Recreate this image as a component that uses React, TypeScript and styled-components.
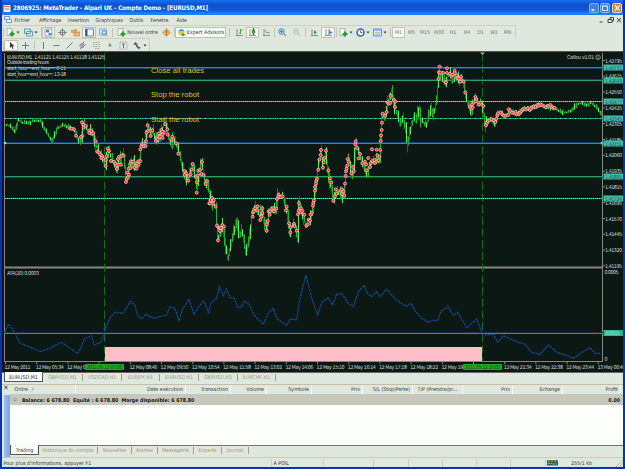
import React from "react";
import styled, { createGlobalStyle } from "styled-components";

const GlobalStyle = createGlobalStyle`
  * {
    box-sizing: border-box;
  }
  body {
    margin: 0;
    overflow: hidden;
  }
`;

const Window = styled.div`
  display: flex;
  flex-direction: column;
  width: 625px;
  height: 469px;
  border: solid #0a32b4;
  border-width: 0 2px 2px;
  background: #dfe8de;
  color: #3c3a36;
  font-family: "DejaVu Sans Condensed", "DejaVu Sans", sans-serif;
  font-size: 5.3px;
  line-height: 8px;
  white-space: nowrap;
`;

const TitleBar = styled.div`
  display: flex;
  align-items: center;
  height: 15px;
  padding: 1px 0 0 1px;
  background: linear-gradient(#1670f4, #0b50c8 35%, #0f5cdc 70%, #1c80ff 90%);
`;

const Title = styled.span`
  flex: 1;
  margin-left: 2px;
  color: #fff;
  font-size: 6.2px;
  font-weight: bold;
  letter-spacing: -0.11px;
`;

const WindowButton = styled.span<{ $close?: boolean }>`
  display: flex;
  width: 10px;
  height: 10px;
  margin-right: 1.5px;
  border: 1px solid ${(props) => (props.$close ? "#f0d8b8" : "#86b4f4")};
  border-radius: 2px;
  background: ${(props) => (props.$close ? "#cc843c" : "#3c80e4")};
`;

const MenuBar = styled.div`
  display: flex;
  align-items: center;
  height: 10px;
  padding-left: 2px;
`;

const MenuItem = styled.span<{ $width: number }>`
  width: ${(props) => props.$width}px;
`;

const Toolbar = styled.div<{ $width: number }>`
  display: flex;
  align-items: center;
  width: ${(props) => props.$width}px;
  height: 13px;
  border: solid #d8ccb8;
  border-width: 1px 1px 0 0;
`;

const Tool = styled.span<{ $width: number; $pressed?: boolean }>`
  display: flex;
  flex: none;
  align-items: center;
  justify-content: center;
  gap: 1px;
  width: ${(props) => props.$width}px;
  height: 11px;
  border: 1px solid ${(props) => (props.$pressed ? "#c4c0b0" : "transparent")};
  background: ${(props) => (props.$pressed ? "#f6faf5" : "transparent")};
`;

const Timeframe = styled(Tool)`
  color: #77736a;
`;

const Separator = styled.i<{ $width: number }>`
  flex: none;
  width: ${(props) => props.$width}px;
  height: 9px;
  background: linear-gradient(#c8c0ac, #c8c0ac) center / 1px 100% no-repeat;
`;

const Chart = styled.svg`
  display: block;
  flex: none;
  width: 621px;
  height: 321px;
  background: #0c1814;
`;

const ChartTabs = styled.div`
  display: flex;
  height: 12px;
  padding-left: 2px;
  border-top: 1px solid #6c675c;
`;

const Tab = styled.span<{ $width: number; $active?: boolean }>`
  width: ${(props) => props.$width}px;
  height: ${(props) => (props.$active ? "10px" : "7px")};
  margin-top: ${(props) => (props.$active ? "-1px" : "1px")};
  border: solid #a89c84;
  border-width: 0 1px 0 0;
  background: ${(props) => (props.$active ? "#fcfdfb" : "transparent")};
  color: ${(props) => (props.$active ? "#333" : "#a0977f")};
  line-height: ${(props) => (props.$active ? "10px" : "7px")};
  text-align: center;
  ${(props) => props.$active && "border: 1px solid #555; border-top: 0;"}
`;

const Terminal = styled.div`
  display: flex;
  height: 73px;
  border-top: 1px solid #c4bca4;
`;

const Handle = styled.div`
  display: flex;
  flex-direction: column;
  width: 8px;
  align-items: center;
`;

const HandleStrip = styled.div`
  width: 6px;
  height: 64px;
  margin: 1px 0 0 1px;
  background: linear-gradient(90deg, #9cc0f0, #7ca4e0);
`;

const TerminalBody = styled.div`
  flex: 1;
  display: flex;
  flex-direction: column;
  background: #fcfefb;
`;

const HeaderRow = styled.div`
  display: flex;
  height: 9px;
  background: #dfe8de;
`;

const HeaderCell = styled.span<{ $width: number; $left?: boolean }>`
  width: ${(props) => props.$width}px;
  padding: 0 2px 0 4.5px;
  border-right: 1px solid #f4f7f2;
  line-height: 9px;
  text-align: ${(props) => (props.$left ? "left" : "right")};
`;

const BalanceRow = styled.div`
  display: flex;
  align-items: center;
  justify-content: space-between;
  height: 11px;
  padding: 0 3px 0 3px;
  background: #c8c7bb;
  color: #161616;
  font-size: 5.25px;
  font-weight: bold;
`;

const Balance = styled.span`
  display: flex;
  align-items: center;
  gap: 5px;
`;

const TerminalTabs = styled.div`
  display: flex;
  height: 12px;
  margin-top: auto;
  border-top: 1px solid #77756c;
  background: #dfe8de;
`;

const StatusBar = styled.div`
  display: flex;
  flex: 1;
  align-items: center;
  border-top: 1px solid #d0c8b0;
`;

const StatusCell = styled.span<{ $width: number }>`
  display: flex;
  flex: none;
  align-items: center;
  width: ${(props) => props.$width}px;
  height: 8px;
  padding-left: 1.5px;
  border-right: 1px solid #d8cbb9;
`;

const Traffic = styled.span`
  flex: 1;
  padding-left: 12px;
`;

type IconProps = { children: React.ReactNode; width?: number };

const Icon = ({ children, width = 9 }: IconProps): JSX.Element => (
  <svg width={width} height="9" viewBox={`0 0 ${width} 9`} fill="none">
    {children}
  </svg>
);

const Caret = (): JSX.Element => (
  <Icon width={4}>
    <path d="M.5 3.5h3L2 5.5z" fill="#333" />
  </Icon>
);

const PlusMark = (): JSX.Element => (
  <path d="M6 3.5v5M3.5 6h5" stroke="#1ea22c" strokeWidth="2" />
);

const Page = (): JSX.Element => (
  <path d="M1 .5h5v7H1z" fill="#fff" stroke="#98a498" strokeWidth=".8" />
);

const Axes = (): JSX.Element => (
  <path d="M2 1v7M1 7.5h7" stroke="#77786e" strokeWidth=".8" />
);

const timeframes: [string, number][] = [
  ["M5", 13],
  ["M15", 14],
  ["M30", 14],
  ["H1", 14],
  ["H4", 14],
  ["D1", 13],
  ["W1", 14],
  ["MN", 13],
];

const pricePoints = `5,125 10,126 15,131 18,120 23,123 30,122 41,120 45,130 52,141 57,129
63,125 72,128 76,133 79,142 82,135 83,122 88,131 93,132 96,145 100,155 106,165 108,148
112,160 117,170 119,158 124,155 126,181 129,168 133,161 137,166 140,161 141,145 145,143
148,125 151,135 153,130 156,141 160,134 165,123 169,137 172,143 173,137 177,147 180,155
184,172 188,180 193,165 197,185 200,170 202,162 205,183 209,189 212,202 216,207 218,240
223,225 226,247 228,260 232,240 237,219 240,237 242,230 246,253 250,233 252,217 255,208
258,213 262,208 267,232 269,212 276,208 278,195 283,197 287,210 290,230 294,223 298,240
299,203 303,213 306,227 310,223 313,207 315,190 318,170 321,152 323,165 326,152 329,177
334,202 336,190 340,192 344,197 346,170 349,158 352,175 354,167 356,142 359,153 363,165
367,172 372,163 377,160 380,157 382,117 385,120 388,103 392,90 395,107 400,125 403,117
406,128 408,145 411,128 414,117 416,120 419,108 421,120 426,126 431,108 434,113 437,100
439,73 442,78 446,80 450,73 452,82 457,75 463,82 466,97 471,110 475,100 478,103 482,103
486,125 490,118 495,125 498,113 501,112 505,117 508,113 510,110 518,113 525,108 531,109
538,105 543,106 550,107 555,109 560,111 565,113 571,111 576,105 581,103 585,105 591,103
597,108 603,115`
  .split(/\s+/)
  .map((point) => point.split(",").map(Number));

const priceAt = (x: number): number => {
  const i = Math.max(1, pricePoints.findIndex((point) => point[0] >= x));
  const [x0, y0] = pricePoints[i - 1];
  const [x1, y1] = pricePoints[i];
  return y0 + ((y1 - y0) * (x - x0)) / (x1 - x0);
};

const bars = Array.from({ length: 597 }, (_, i) => {
  const x = i + 5;
  const calm = x < 80 || x > 486;
  const size = calm ? 3 : 8;
  const a = priceAt(x);
  const b = priceAt(x + 1);
  const up = ((i * 37) % 11) / 11;
  const down = ((i * 53) % 13) / 13;
  return {
    x: x + 0.5,
    top: Math.min(a, b) - up * up * size - 0.5,
    bottom: Math.max(a, b) + down * down * size + 0.5,
    color: ["#128a14", "#1fb424", "#0f7512", "#52f058"][(i * 7) % 4],
  };
});

// Trade markers, at three units per pixel, grouped by chart section.
const markers = [
  {
    x: 0,
    y: 80,
    points: `210,145 215,146 222,148 228,167 246,127 250,135 251,143 257,138 247,168 243,171
268,152 268,159 275,154 275,161 280,160 287,184 292,215 297,217 300,223 306,228 304,234 310,236
317,240 317,258 320,228 323,206 327,213 333,243 342,245 346,251 350,256 351,267 358,230 354,237
356,254 363,254 364,228 371,227 378,306 380,297 384,292 382,278 387,284 386,266 392,264 392,250
393,244 401,245 404,262 410,252 409,266 412,258 415,244 416,254 421,243 421,208 424,199 426,192
431,193 432,199 437,198 438,184 440,158 443,136 445,152 452,168 452,152 457,151 468,183 470,174
473,178 475,169 477,160 480,170 484,150 488,163 488,174 496,132 502,148 492,157 487,155 503,164
517,170 515,180 528,190 535,221 553,273 558,280 554,285 565,302 565,288 572,283 575,269 578,252
590,338 591,307 589,291 593,286 595,272 600,270 606,246 604,282 611,285 617,312 621,303 628,370`,
  },
  {
    x: 200,
    y: 80,
    points: `30,370 31,360 36,354 38,364 41,361 39,371 47,380 51,437 54,481 56,443 60,453 59,444
63,444 67,435 72,440 158,410 159,397 162,394 165,385 173,379 172,390 187,385 187,399 183,407 181,420
184,410 200,452 201,433 203,423 209,404 206,394 210,394 215,386 220,384 222,394 229,386 231,357
236,344 235,350 241,351 248,349 260,380 258,391 267,430 272,441 271,457 282,432 283,438 291,452
294,403 296,392 297,370 303,385 302,397 307,392 313,404 319,437 323,433 326,419 330,422 332,404
336,398 339,377 340,369 342,361 345,332 345,321 348,311 349,303 351,296 355,269 358,239 362,225
363,210 373,234 371,246 369,263 378,212 385,271 390,295 394,307 400,362 407,328 410,341 405,349
422,332 426,328 431,335 433,347 426,342 435,311 437,288 438,274 440,266 442,257 443,237 446,245
454,280 460,261 461,273 466,193 467,184 472,204 480,222 476,235 487,250 495,245 499,253 500,271
505,234 512,250 510,261 516,208 518,242 524,240 525,249 530,209 532,226 536,241 538,231 541,210
542,183 543,166 545,150 546,128 548,101 555,108 560,96 562,67 566,71 571,69 572,48 582,60 586,65
585,81`,
  },
  {
    x: 400,
    y: 50,
    points: `119,50 117,67 116,87 121,68 130,69 141,55 141,69 136,96 138,97 151,72 155,77 159,74
164,62 165,70 170,76 172,84 176,86 183,80 184,90 181,95 191,95 196,127 209,170 214,175 218,173
216,163 221,158 226,141 229,148 228,154 236,164 241,158 250,168 258,226 261,219 264,213 269,211
275,208 282,211 286,216 289,207 292,196 294,190 302,187 307,193 311,197 317,197 325,195 326,178
331,183 336,188 343,190 347,186 350,193 356,193 360,189 364,183 368,178 373,175 379,178 384,174
389,180 393,176 397,171 402,169 407,171 412,165 417,167 422,163 427,166 433,169 438,172 444,168
451,165 457,171 461,175 464,174`,
  },
];

const atrPoints = `13,205 25,178 40,195 60,235 95,248 120,260 150,250 185,232 210,250 232,265
245,245 252,222 275,212 282,240 303,232 312,205 330,158 345,142 370,145 392,108 405,120 412,150
425,162 437,148 460,160 480,155 500,150 510,125 525,130 537,168 548,132 567,103 582,148 596,126
610,108 615,115 625,143 633,115 650,100 658,65 670,92 680,72 690,98 703,100 713,128 725,125
733,108 750,120 760,148 790,178 805,145 820,130 830,160 860,182 870,162 890,165 897,115 908,68
918,30 935,100 953,150 965,112 985,98 997,120 1010,88 1025,85 1045,115 1060,125 1075,80 1093,60
1102,85 1115,95 1130,80 1140,95 1160,72 1175,90 1190,105 1218,125 1233,115 1245,138 1265,160
1285,172 1295,165 1313,168 1323,138 1345,125 1360,152 1373,142 1400,188 1430,162 1445,200 1455,210
1480,208 1493,232 1510,212 1545,228 1575,238 1595,262 1620,268 1645,240 1670,262 1695,270 1720,280
1745,262 1770,248 1785,265 1803,265`;

type Level = {
  y: number;
  label: string;
  blue?: "above" | "below";
  dash?: string;
};

const levels: Level[] = [
  { y: 67, label: "1.42731", blue: "below" },
  { y: 80, label: "1.42643", blue: "above" },
  { y: 101, label: "1.42477", dash: "1 1" },
  { y: 118, label: "1.42345", dash: "1 4" },
  { y: 143, label: "1.42151", blue: "above" },
  { y: 176, label: "1.41891", blue: "below" },
  { y: 198, label: "1.41724", dash: "1 1" },
];

const prices = [
  "1.42795", "1.42675", "1.42550", "1.42425", "1.42305", "1.42185", "1.42060",
  "1.41935", "1.41815", "1.41695", "1.41570", "1.41445", "1.41320", "1.41195",
];

const times = [
  "12 May 2011", "12 May 05:34", "12 May 06:38", "", "12 May 08:46",
  "12 May 09:50", "12 May 10:54", "12 May 11:58", "12 May 13:02",
  "12 May 14:06", "12 May 15:10", "12 May 16:14", "12 May 17:18",
  "12 May 18:22", "12 May 19:26", "", "12 May 21:34", "12 May 22:38",
  "12 May 23:44", "13 May 00:48",
];

const PriceChart = (): JSX.Element => (
  <Chart viewBox="2 51 621 321" fontSize="5.3" fill="#d4d8d2">
    <path d="M2 51.5h621" stroke="#59554a" />
    <path d="M4.5 53v308.500M602.500 53v308.500" stroke="#8c8680" />
    <path d="M4 267.500h599" stroke="#8c8680" strokeWidth="2" />
    <path d="M4 361.500h599" stroke="#8c8680" />
    <rect x="105" y="347" width="377" height="14" fill="#ffbfca" />
    <path
      d="M104.500 53v308M482.500 53v308"
      stroke="#147014"
      strokeDasharray="8.200 3.500"
    />
    <path d="M480 52.500h5l-2.500 2.500z" fill="#a8a8a8" />

    {levels.map(({ y, blue, dash }) => (
      <g key={y}>
        {blue && (
          <path
            d={`M5 ${blue === "above" ? y - 0.5 : y + 1.5}h598`}
            stroke="#124470"
          />
        )}
        <path d={`M5 ${y + 0.5}h598`} stroke="#2a9c6c" />
        {dash && (
          <path
            d={`M5 ${y + 0.5}h598`}
            stroke="#7ce8cc"
            strokeDasharray={dash}
          />
        )}
      </g>
    ))}
    <path d="M5 332.500h598" stroke="#0e3048" />
    <path d="M5 333.500h598" stroke="#2a9c6c" />

    {bars.map(({ x, top, bottom, color }) => (
      <path key={x} d={`M${x} ${top}V${bottom}`} stroke={color} />
    ))}
    {markers.map(({ x, y, points }) => (
      <g key={x} transform={`translate(${x} ${y}) scale(.33333)`}>
        {points.split(/\s+/).map((point, i) => {
          const [cx, cy] = point.split(",");
          return (
            <circle
              key={i}
              cx={cx}
              cy={cy}
              r="4.500"
              fill="#fa2224"
              stroke="#ecc4bc"
              strokeWidth="2.600"
            />
          );
        })}
      </g>
    ))}
    <circle cx="5" cy="143" r="1.300" fill="#8ce8e8" />
    <circle cx="602" cy="143" r="1.500" fill="#50d0b8" />

    <polyline
      points={atrPoints}
      transform="translate(0 265) scale(.33333)"
      fill="none"
      stroke="#124c94"
      strokeWidth="3.500"
      strokeDasharray="8 2"
    />

    <text x="7" y="59" textLength="98">
      EURUSD,M1 &nbsp;1.41121 1.41125 1.41118 1.41125
    </text>
    <text x="7" y="64" textLength="42">Outside trading hours</text>
    <text x="7" y="70" textLength="59">start_hour=end_hour=: 6-11</text>
    <text x="7" y="75.500" textLength="59">start_hour=end_hour=: 13-18</text>
    <text x="567" y="59" textLength="27">Caillou v1.01</text>
    <g fill="none" stroke="#c8ccc8" strokeWidth=".6">
      <circle cx="598" cy="57.300" r="2.300" />
      <path d="M596.800 57.800q1.200 1.400 2.400 0M597.200 56.300v.5M598.800 56.300v.5" />
    </g>
    <text x="7" y="275" textLength="32">ATR(20) 0.0003</text>
    <g
      fill="#d8c80c"
      fontFamily="Liberation Sans, Arial, sans-serif"
      fontSize="7.600"
    >
      <text x="151" y="73" textLength="53">Close all trades</text>
      <text x="151" y="97" textLength="48">Stop the robot</text>
      <text x="151" y="121.500" textLength="48">Start the robot</text>
    </g>

    {prices.map((price, i) => (
      <g key={price}>
        <path d={`M603 ${60.5 + i * 15.8}h2`} stroke="#8c8680" />
        <text x="605" y={62.5 + i * 15.8} textLength="17">
          {price}
        </text>
      </g>
    ))}
    {levels.map(({ y, label }) => (
      <g key={label}>
        <rect x="603.500" y={y - 2.5} width="19.500" height="6" fill="#44bca4" />
        <text x="605" y={y + 2.5} fill="#145c6c" textLength="17">
          {label}
        </text>
      </g>
    ))}
    <text x="604.500" y="274" textLength="14">0.0005</text>
    <rect x="603.500" y="330" width="19.500" height="6" fill="#34ac84" />
    <text x="605" y="335" fill="#90f0dc" textLength="15">0.00015</text>
    <text x="604.500" y="361">0</text>

    {times.map((time, i) => (
      <g key={i}>
        <path d={`M${5.5 + i * 31.2} 362v2`} stroke="#8c8680" />
        {time && (
          <text
            x={4.6 + i * 31.2}
            y="369"
            textLength={i ? 28 : 26}
          >
            {time}
          </text>
        )}
      </g>
    ))}
    {[85, 463].map((x, i) => (
      <g key={x}>
        <rect x={x} y="364" width="39" height="6" rx="1" fill="#24a824" />
        <text x={x + 1.5} y="369" fill="#0c5410" textLength="36">
          {i ? "2011.05.12 20:00" : "2011.05.12 07:00"}
        </text>
      </g>
    ))}
  </Chart>
);

const App = (): JSX.Element => {
  return (
    <>
      <GlobalStyle />
      <Window>
        <TitleBar>
          <Icon width={8}>
            <path d="M.5 1h7v7h-7z" fill="#fff4f0" />
            <path d="M1 2.500h6M1.500 5h5" stroke="#d86c58" />
          </Icon>
          <Title>
            2806925: MetaTrader - Alpari UK - Compte Demo - [EURUSD,M1]
          </Title>
          <WindowButton>
            <Icon width={8}>
              <path d="M1.500 6h3" stroke="#fff" strokeWidth="1.500" />
            </Icon>
          </WindowButton>
          <WindowButton>
            <Icon width={8}>
              <path d="M1.500 2h5v4.500h-5z" stroke="#fff" />
            </Icon>
          </WindowButton>
          <WindowButton $close>
            <Icon width={8}>
              <path d="M2 1.500l4.500 5M6.500 1.500L2 6.500" stroke="#fff" strokeWidth="1.300" />
            </Icon>
          </WindowButton>
        </TitleBar>

        <MenuBar>
          <MenuItem $width={10.5}>
            <Icon width={8}>
              <path d="M.5 1.500h5v3h-5zM2.500 4.500h5v3h-5z" fill="#fff" stroke="#6c9cd4" />
            </Icon>
          </MenuItem>
          <MenuItem $width={24.5}>Fichier</MenuItem>
          <MenuItem $width={29}>Affichage</MenuItem>
          <MenuItem $width={27.5}>Insertion</MenuItem>
          <MenuItem $width={34}>Graphiques</MenuItem>
          <MenuItem $width={21}>Outils</MenuItem>
          <MenuItem $width={26}>Fenetre</MenuItem>
          <MenuItem $width={421}>Aide</MenuItem>
          <Icon width={25}>
            <path d="M1.500 6h3M10 3.500h4v3h-4zM12 3V1.500h3.500V5H14" stroke="#444" />
            <path d="M19 2l4 4.500M23 2l-4 4.500" stroke="#444" />
          </Icon>
        </MenuBar>

        <Toolbar $width={514}>
          <Separator $width={2} />
          <Tool $width={18}>
            <Icon><Page /><PlusMark /></Icon>
            <Caret />
          </Tool>
          <Tool $width={18}>
            <Icon>
              <path d="M.5 1h6v4.500h-6zM2.500 3.500h6V8h-6z" fill="#e4f0fc" stroke="#5c98d0" />
            </Icon>
            <Caret />
          </Tool>
          <Separator $width={2} />
          <Tool $width={13} $pressed>
            <Icon>
              <path d="M1 1h7v7H1z" fill="#fff" stroke="#7ca4cc" />
              <path d="M2 2h3v2.500H2z" fill="#36a64c" />
              <path d="M4.500 5h3v2h-3z" fill="#4c90dc" />
            </Icon>
          </Tool>
          <Tool $width={14}>
            <Icon>
              <circle cx="4.500" cy="4.500" r="2.500" stroke="#777" />
              <path d="M4.500 0v9M0 4.500h9" stroke="#777" strokeWidth=".8" />
            </Icon>
          </Tool>
          <Tool $width={13}>
            <Icon>
              <path d="M0 2h2l1-1h3v4H0z" fill="#e0a458" />
              <path d="M3 5h2l1-1h3v4H3z" fill="#e8bc70" stroke="#b8803c" strokeWidth=".6" />
            </Icon>
          </Tool>
          <Tool $width={14} $pressed>
            <Icon>
              <path d="M.5 1h8v7h-8z" fill="#fff" stroke="#4488cc" />
              <path d="M1.500 1v7" stroke="#315c98" strokeWidth="2" />
            </Icon>
          </Tool>
          <Tool $width={14}>
            <Icon>
              <path d="M.5 1h7v6h-7z" fill="#dceaf8" stroke="#80aad0" />
              <circle cx="5" cy="4.500" r="2" stroke="#447cc0" />
              <path d="M6.500 6l2 2.500" stroke="#c89454" />
            </Icon>
          </Tool>
          <Separator $width={5} />
          <Tool $width={45}>
            <Icon><Page /><PlusMark /></Icon>
            Nouvel ordre
          </Tool>
          <Tool $width={13}>
            <Icon>
              <path d="M4.500 .5l4 4-4 4-4-4z" fill="#ecae58" stroke="#c88434" strokeWidth=".6" />
              <path d="M4.500 2.500v2.500M4.500 6v1" stroke="#94501c" />
            </Icon>
          </Tool>
          <Separator $width={2} />
          <Tool $width={51} $pressed>
            <Icon>
              <path d="M1 3.500q3.500-5 7 0z" fill="#4890dc" />
              <path d="M1.500 4h6v2l-3 2-3-2z" fill="#ecc058" />
              <path d="M4.500 5l4 1.500-3 2z" fill="#28a83c" />
            </Icon>
            Expert Advisors
          </Tool>
          <Separator $width={6} />
          <Tool $width={14}>
            <Icon><Axes /><path d="M5.500 1v5M5.500 2h2M4 5h1.500" stroke="#60a02c" /></Icon>
          </Tool>
          <Tool $width={13} $pressed>
            <Icon><Axes /><path d="M5.500 0v7" stroke="#187824" /><path d="M4 1.500h3v4H4z" fill="#24a834" /></Icon>
          </Tool>
          <Tool $width={14}>
            <Icon><Axes /><path d="M3 2l2 3 3-1" stroke="#78a440" /></Icon>
          </Tool>
          <Separator $width={3} />
          <Tool $width={13}>
            <Icon>
              <circle cx="3.500" cy="3.500" r="2.800" fill="#b8dcfc" stroke="#3c88dc" />
              <path d="M3.500 2v3M2 3.500h3" stroke="#236cbc" strokeWidth=".8" />
              <path d="M5.500 5.500L8 8" stroke="#cc9448" strokeWidth="1.500" />
            </Icon>
          </Tool>
          <Tool $width={14}>
            <Icon>
              <circle cx="4" cy="3.500" r="2.500" stroke="#c4b9ac" />
              <path d="M3 3.500h2M6 5.500L8 8" stroke="#c4b4a8" />
            </Icon>
          </Tool>
          <Separator $width={4} />
          <Tool $width={14}>
            <Icon><Axes /><path d="M4 2l3 2.300-3 2.200z" fill="#38a428" /></Icon>
          </Tool>
          <Tool $width={14} $pressed>
            <Icon><Axes /><path d="M5 1v6" stroke="#387cd4" /><path d="M5.500 2.500l3 2-3 2z" fill="#3878d0" /></Icon>
          </Tool>
          <Separator $width={3} />
          <Tool $width={16}>
            <Icon><Page /><PlusMark /></Icon>
            <Caret />
          </Tool>
          <Tool $width={17}>
            <Icon>
              <circle cx="4.500" cy="4.500" r="3.500" fill="#fff" stroke="#2868c0" strokeWidth="1.500" />
              <path d="M4.500 2.500v2h2" stroke="#333" strokeWidth=".7" />
            </Icon>
            <Caret />
          </Tool>
          <Tool $width={17}>
            <Icon>
              <path d="M.5 1h8v7h-8z" fill="#e8f0f8" stroke="#5c94d0" />
              <path d="M1 2h7" stroke="#5c94d0" />
              <path d="M2 5l2-1 2 1 1.500-1M2 7l5-1" stroke="#a08460" strokeWidth=".7" />
            </Icon>
            <Caret />
          </Tool>
          <Separator $width={4} />
          <Timeframe $width={13} $pressed>M1</Timeframe>
          {timeframes.map(([label, width]) => (
            <Timeframe key={label} $width={width}>{label}</Timeframe>
          ))}
        </Toolbar>

        <Toolbar $width={148}>
          <Separator $width={2} />
          <Tool $width={14} $pressed>
            <Icon><path d="M3 1v6l1.500-1.500 1 2.500 1-.5-1-2.200h2z" fill="#333" /></Icon>
          </Tool>
          <Tool $width={15}>
            <Icon><path d="M4.500 1v7M1 4.500h7" stroke="#777" /></Icon>
          </Tool>
          <Separator $width={3} />
          <Tool $width={14}>
            <Icon><path d="M4.500 1v7" stroke="#777" /></Icon>
          </Tool>
          <Tool $width={13}>
            <Icon><path d="M1.500 4.500h6" stroke="#777" /></Icon>
          </Tool>
          <Tool $width={13}>
            <Icon><path d="M1.500 7.500l6-6" stroke="#777" /></Icon>
          </Tool>
          <Tool $width={13}>
            <Icon><path d="M1 5l5-4M2 8l6-5M3 3v4M5 2v5" stroke="#666" strokeWidth=".8" /></Icon>
          </Tool>
          <Tool $width={14}>
            <Icon><path d="M1 1.500h7M1 3.500h7M1 5.500h7M3 7.500h5" stroke="#999285" strokeWidth=".7" strokeDasharray="1 .5" /></Icon>
          </Tool>
          <Tool $width={14}>A</Tool>
          <Tool $width={13}>
            <Icon>
              <path d="M1 1h7v7H1z" stroke="#888" strokeWidth=".7" strokeDasharray="1 .7" />
              <path d="M3 3h3M4.500 3v4" stroke="#555" strokeWidth=".8" />
            </Icon>
          </Tool>
          <Tool $width={20}>
            <Icon>
              <path d="M0 3.500L2.500 1 5 3.500H3.500L6 6h1.500L6 8.500 4 6.500 2 3.500z" fill="#555" />
            </Icon>
            <Caret />
          </Tool>
        </Toolbar>

        <PriceChart />

        <ChartTabs>
          <Tab $width={39} $active>EURUSD,M1</Tab>
          <Tab $width={40}>GBPUSD,M1</Tab>
          <Tab $width={39}>USDCAD,H1</Tab>
          <Tab $width={38}>EURJPY,H1</Tab>
          <Tab $width={39}>EURUSD,H1</Tab>
          <Tab $width={39}>GBPUSD,H1</Tab>
          <Tab $width={38}>EURCHF,H1</Tab>
        </ChartTabs>

        <Terminal>
          <Handle>
            <Icon width={6}>
              <path d="M1.500 1l3 3M4.500 1l-3 3" stroke="#222" />
            </Icon>
            <HandleStrip />
          </Handle>
          <TerminalBody>
            <HeaderRow>
              <HeaderCell $width={66} $left>Ordre &nbsp; ⁄</HeaderCell>
              <HeaderCell $width={110}>Date exécution</HeaderCell>
              <HeaderCell $width={45}>Transaction</HeaderCell>
              <HeaderCell $width={36}>Volume</HeaderCell>
              <HeaderCell $width={45}>Symbole</HeaderCell>
              <HeaderCell $width={51}>Prix</HeaderCell>
              <HeaderCell $width={50}>S/L (Stop/Perte)</HeaderCell>
              <HeaderCell $width={50} $left>T/P (Prendre/pr...</HeaderCell>
              <HeaderCell $width={50}>Prix</HeaderCell>
              <HeaderCell $width={50}>Echange</HeaderCell>
              <HeaderCell $width={58}>Profit</HeaderCell>
            </HeaderRow>
            <BalanceRow>
              <Balance>
                <Icon width={4}>
                  <circle cx="2" cy="4.500" r="1.400" stroke="#888" strokeWidth=".7" />
                </Icon>
                <span>
                  Balance: 6 678.80 &nbsp;Equité : 6 678.80 &nbsp;Marge
                  disponible: 6 678.80
                </span>
              </Balance>
              <span>0.00</span>
            </BalanceRow>
            <TerminalTabs>
              <Tab $width={29} $active>Trading</Tab>
              <Tab $width={59}>Historique du compte</Tab>
              <Tab $width={34}>Nouvelles</Tab>
              <Tab $width={26}>Alertes</Tab>
              <Tab $width={36}>Messagerie</Tab>
              <Tab $width={28}>Experts</Tab>
              <Tab $width={27}>Journal</Tab>
            </TerminalTabs>
          </TerminalBody>
        </Terminal>

        <StatusBar>
          <StatusCell $width={270}>
            Pour plus d'informations, appuyer F1
          </StatusCell>
          <StatusCell $width={52}>A POIL</StatusCell>
          <StatusCell $width={50} />
          <StatusCell $width={35} />
          <StatusCell $width={34} />
          <StatusCell $width={34} />
          <StatusCell $width={34} />
          <StatusCell $width={35} />
          <Icon width={13}>
            <path d="M1 2h11v5.500H1z" fill="#385c58" />
            <path d="M2 3h10M2 5.500h4" stroke="#c4bc24" strokeWidth="1.200" strokeDasharray="2 1" />
            <path d="M6 6h5" stroke="#4ca0dc" />
          </Icon>
          <Traffic>255/1 kb</Traffic>
          <Icon width={8}>
            <path d="M1 9l7-7M4 9l4-4M6.500 9l1.500-1.500" stroke="#b4aa90" strokeWidth=".8" />
          </Icon>
        </StatusBar>
      </Window>
    </>
  );
};

export default App;
